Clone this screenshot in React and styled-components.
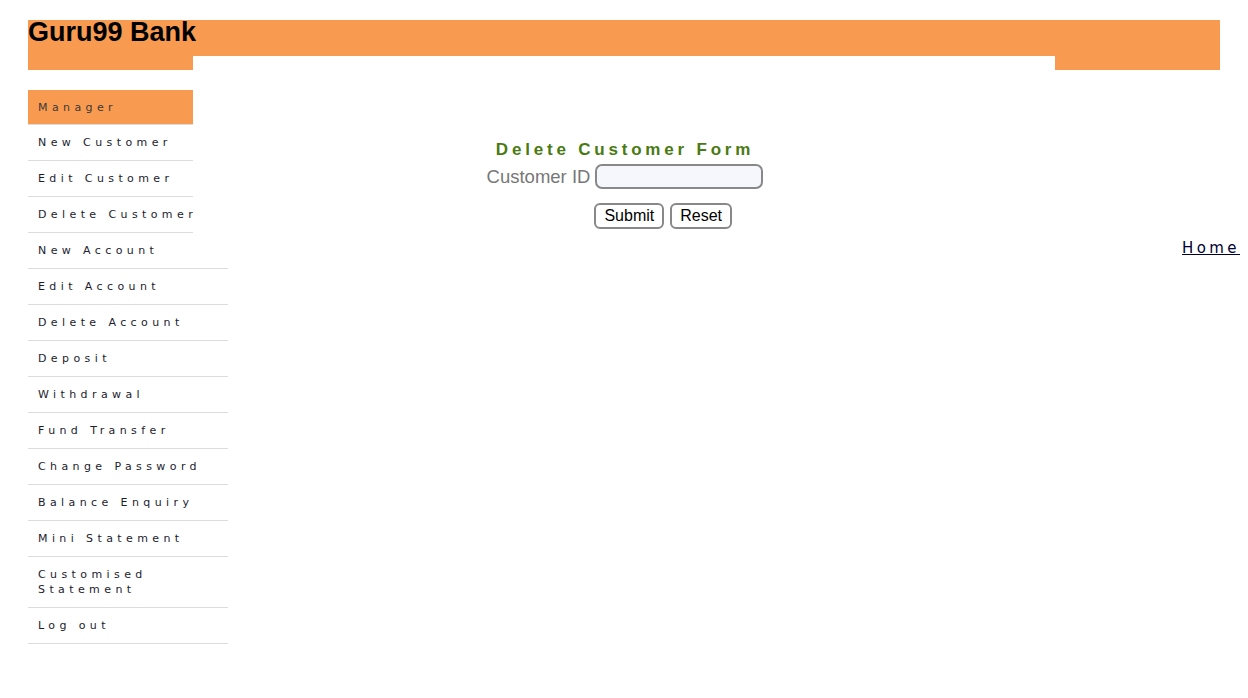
import React from 'react';
import styled, { createGlobalStyle } from 'styled-components';

const GlobalStyle = createGlobalStyle`
    body {
        margin: 0;
        background: #fff;
        font-family: "Liberation Sans", Arial, sans-serif;
    }
`

const ORANGE = '#F89B50';

const Page = styled.div`
    padding: 20px 28px;
    width: 1192px;
`

const Header = styled.header`
    display: flex;
    flex-direction: column;
`

const TopBar = styled.div`
    background: ${ORANGE};
    height: 36px;
`

const Title = styled.h1`
    margin: 0;
    font-family: "Liberation Sans", Arial, sans-serif;
    font-weight: bold;
    font-size: 27px;
    line-height: 25px;
    color: #000;
`

const LowerBar = styled.div`
    display: grid;
    grid-template-columns: 165px 1fr 165px;
    height: 14px;
`

const Block = styled.div`
    background: ${p => p.filled ? ORANGE : 'transparent'};
`

const Body = styled.div`
    display: grid;
    grid-template-columns: 165px 862px 165px;
    margin-top: 20px;
`

const Menu = styled.ul`
    list-style: none;
    margin: 0;
    padding: 0;
`

const MenuItem = styled.li`
    width: ${p => p.wide ? '200px' : '165px'};
    box-sizing: border-box;
    padding: ${p => p.active ? '10px 10px 9px' : '10px'};
    font-family: "DejaVu Sans", Verdana, sans-serif;
    font-size: 11px;
    line-height: 15px;
    letter-spacing: 4.4px;
    white-space: nowrap;
    color: ${p => p.active ? '#3a3a3a' : '#1c1c2e'};
    background: ${p => p.active ? ORANGE : 'transparent'};
    border-bottom: 1px solid #dcdcdc;
`

const Main = styled.main`
    display: flex;
    flex-direction: column;
    align-items: center;
    padding-top: 49px;
`

const FormTitle = styled.h2`
    margin: 0;
    font-family: "Liberation Sans", Arial, sans-serif;
    font-size: 17px;
    line-height: 21px;
    font-weight: bold;
    letter-spacing: 3.8px;
    color: #4A7A12;
    padding-left: 2px;
`

const FormGrid = styled.form`
    display: grid;
    grid-template-columns: auto auto;
    column-gap: 5px;
    row-gap: 14px;
    margin-top: 4px;
    margin-left: 2px;
    align-items: center;
`

const Label = styled.label`
    font-size: 18.5px;
    color: #777;
    text-align: right;
    line-height: 25px;
`

const Input = styled.input`
    width: 168px;
    height: 25px;
    box-sizing: border-box;
    border: 2px solid #888;
    border-radius: 7px;
    background: #F6F7FD;
    outline: none;
`

const Buttons = styled.div`
    display: flex;
    gap: 6px;
    grid-column: 2;
    margin-left: -1px;
`

const Button = styled.button`
    height: 26px;
    padding: 0 8px;
    box-sizing: border-box;
    border: 2px solid #888;
    border-radius: 6px;
    background: #fff;
    font-family: "Liberation Sans", Arial, sans-serif;
    font-size: 16px;
    color: #000;
`

const Side = styled.aside`
    display: flex;
    justify-content: flex-end;
    padding-top: 149px;
    margin-right: -20px;
`

const HomeLink = styled.a`
    font-family: "DejaVu Sans", sans-serif;
    font-size: 15px;
    letter-spacing: 3.4px;
    color: #000033;
    text-decoration: underline;
    line-height: 18px;
`

const items = [
    'New Customer',
    'Edit Customer',
    'Delete Customer',
    'New Account',
    'Edit Account',
    'Delete Account',
    'Deposit',
    'Withdrawal',
    'Fund Transfer',
    'Change Password',
    'Balance Enquiry',
    'Mini Statement',
    'Customised Statement',
    'Log out',
];

export default function App() {
    return (
        <Page>
            <GlobalStyle />
            <Header>
                <TopBar>
                    <Title>Guru99 Bank</Title>
                </TopBar>
                <LowerBar>
                    <Block filled />
                    <Block />
                    <Block filled />
                </LowerBar>
            </Header>
            <Body>
                <Menu>
                    <MenuItem active>Manager</MenuItem>
                    {items.map((item, i) => (
                        <MenuItem key={item} wide={i > 2}>
                            {item === 'Customised Statement' ? <>Customised<br />Statement</> : item}
                        </MenuItem>
                    ))}
                </Menu>
                <Main>
                    <FormTitle>Delete Customer Form</FormTitle>
                    <FormGrid onSubmit={e => e.preventDefault()}>
                        <Label htmlFor="cusid">Customer ID</Label>
                        <Input id="cusid" name="cusid" />
                        <Buttons>
                            <Button type="submit">Submit</Button>
                            <Button type="reset">Reset</Button>
                        </Buttons>
                    </FormGrid>
                </Main>
                <Side>
                    <div>
                        <HomeLink href="#">Home</HomeLink>
                    </div>
                </Side>
            </Body>
        </Page>
    );
}
